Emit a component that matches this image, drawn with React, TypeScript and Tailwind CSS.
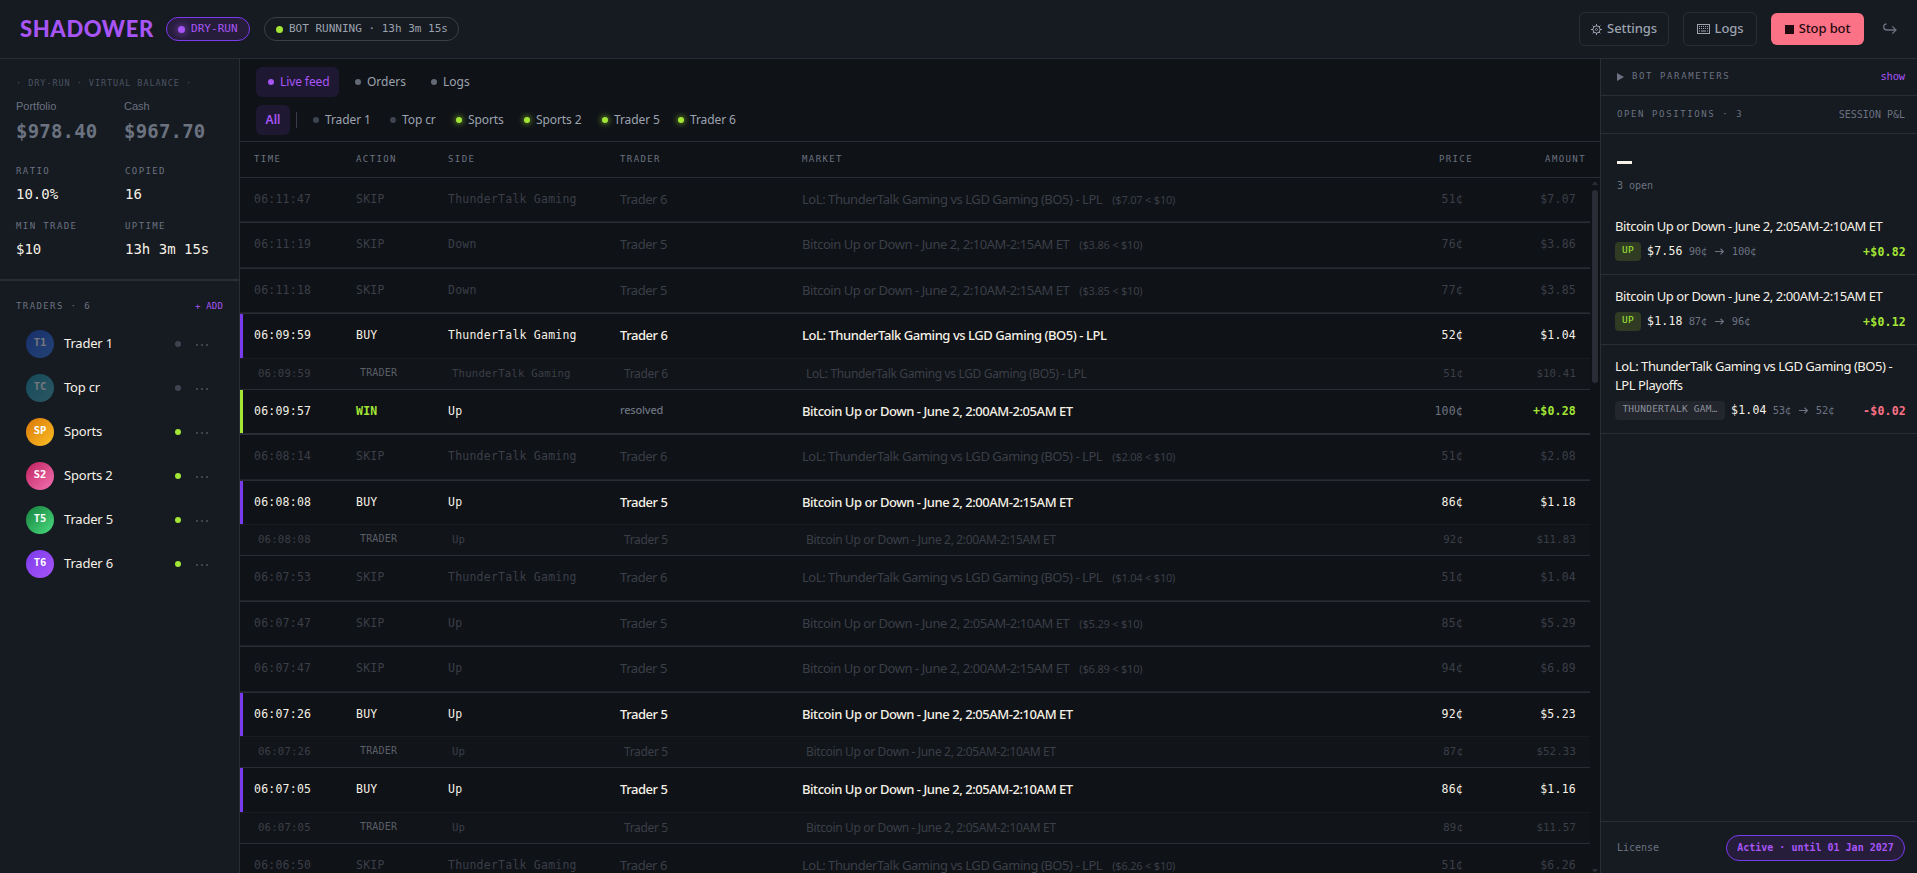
import { clsx } from "clsx";

type FeedKind = "skip" | "buy" | "copy" | "win";

interface FeedRow {
  kind: FeedKind;
  time: string;
  side: string;
  trader: string;
  market: string;
  note?: string;
  price: string;
  amount: string;
  height: string;
}

interface Trader {
  name: string;
  initials: string;
  active: boolean;
  gradient: string;
}

interface Position {
  title: string;
  side: string;
  stake: string;
  from: string;
  to: string;
  pnl: string;
  height: string;
}

const LOL = "LoL: ThunderTalk Gaming vs LGD Gaming (BO5) - LPL";
const BTC = "Bitcoin Up or Down - June 2, ";

const rows: FeedRow[] = [
  { kind: "skip", time: "06:11:47", side: "ThunderTalk Gaming", trader: "Trader 6", market: LOL, note: "($7.07 < $10)", price: "51¢", amount: "$7.07", height: "h-[45px]" },
  { kind: "skip", time: "06:11:19", side: "Down", trader: "Trader 5", market: `${BTC}2:10AM-2:15AM ET`, note: "($3.86 < $10)", price: "76¢", amount: "$3.86", height: "h-[46px]" },
  { kind: "skip", time: "06:11:18", side: "Down", trader: "Trader 5", market: `${BTC}2:10AM-2:15AM ET`, note: "($3.85 < $10)", price: "77¢", amount: "$3.85", height: "h-[45px]" },
  { kind: "buy", time: "06:09:59", side: "ThunderTalk Gaming", trader: "Trader 6", market: LOL, price: "52¢", amount: "$1.04", height: "h-[45px]" },
  { kind: "copy", time: "06:09:59", side: "ThunderTalk Gaming", trader: "Trader 6", market: LOL, price: "51¢", amount: "$10.41", height: "h-[31px]" },
  { kind: "win", time: "06:09:57", side: "Up", trader: "resolved", market: `${BTC}2:00AM-2:05AM ET`, price: "100¢", amount: "+$0.28", height: "h-[45px]" },
  { kind: "skip", time: "06:08:14", side: "ThunderTalk Gaming", trader: "Trader 6", market: LOL, note: "($2.08 < $10)", price: "51¢", amount: "$2.08", height: "h-[46px]" },
  { kind: "buy", time: "06:08:08", side: "Up", trader: "Trader 5", market: `${BTC}2:00AM-2:15AM ET`, price: "86¢", amount: "$1.18", height: "h-[44px]" },
  { kind: "copy", time: "06:08:08", side: "Up", trader: "Trader 5", market: `${BTC}2:00AM-2:15AM ET`, price: "92¢", amount: "$11.83", height: "h-[31px]" },
  { kind: "skip", time: "06:07:53", side: "ThunderTalk Gaming", trader: "Trader 6", market: LOL, note: "($1.04 < $10)", price: "51¢", amount: "$1.04", height: "h-[46px]" },
  { kind: "skip", time: "06:07:47", side: "Up", trader: "Trader 5", market: `${BTC}2:05AM-2:10AM ET`, note: "($5.29 < $10)", price: "85¢", amount: "$5.29", height: "h-[45px]" },
  { kind: "skip", time: "06:07:47", side: "Up", trader: "Trader 5", market: `${BTC}2:00AM-2:15AM ET`, note: "($6.89 < $10)", price: "94¢", amount: "$6.89", height: "h-[46px]" },
  { kind: "buy", time: "06:07:26", side: "Up", trader: "Trader 5", market: `${BTC}2:05AM-2:10AM ET`, price: "92¢", amount: "$5.23", height: "h-[44px]" },
  { kind: "copy", time: "06:07:26", side: "Up", trader: "Trader 5", market: `${BTC}2:05AM-2:10AM ET`, price: "87¢", amount: "$52.33", height: "h-[31px]" },
  { kind: "buy", time: "06:07:05", side: "Up", trader: "Trader 5", market: `${BTC}2:05AM-2:10AM ET`, price: "86¢", amount: "$1.16", height: "h-[45px]" },
  { kind: "copy", time: "06:07:05", side: "Up", trader: "Trader 5", market: `${BTC}2:05AM-2:10AM ET`, price: "89¢", amount: "$11.57", height: "h-[31px]" },
  { kind: "skip", time: "06:06:50", side: "ThunderTalk Gaming", trader: "Trader 6", market: LOL, note: "($6.26 < $10)", price: "51¢", amount: "$6.26", height: "h-[46px]" },
];

const traders: Trader[] = [
  { name: "Trader 1", initials: "T1", active: false, gradient: "from-[#1d4ed8] to-[#3b82f6]" },
  { name: "Top cr", initials: "TC", active: false, gradient: "from-[#0891b2] to-[#4cb5c4]" },
  { name: "Sports", initials: "SP", active: true, gradient: "from-[#d97706] to-[#fbbf24]" },
  { name: "Sports 2", initials: "S2", active: true, gradient: "from-[#be185d] to-[#f472b6]" },
  { name: "Trader 5", initials: "T5", active: true, gradient: "from-[#15803d] to-[#4ade80]" },
  { name: "Trader 6", initials: "T6", active: true, gradient: "from-[#7c3aed] to-[#a855f7]" },
];

const positions: Position[] = [
  { title: `${BTC}2:05AM-2:10AM ET`, side: "UP", stake: "$7.56", from: "90¢", to: "100¢", pnl: "+$0.82", height: "h-[70px]" },
  { title: `${BTC}2:00AM-2:15AM ET`, side: "UP", stake: "$1.18", from: "87¢", to: "96¢", pnl: "+$0.12", height: "h-[70px]" },
  { title: "LoL: ThunderTalk Gaming vs LGD Gaming (BO5) - LPL Playoffs", side: "THUNDERTALK GAM…", stake: "$1.04", from: "53¢", to: "52¢", pnl: "-$0.02", height: "h-[89px]" },
];

const mono = "font-['DejaVu_Sans_Mono',monospace]";
const sans = "font-['Noto_Sans',sans-serif]";
const mono13 = `${mono} text-[11.5px] tracking-[0.23px]`;
const label = `${mono} text-[9px] tracking-[1.4px] text-[#6b7280]`;
const columns =
  "grid grid-cols-[102px_92px_172px_182px_minmax(0,1fr)_113px] items-center";

function Dot({ className }: { className: string }) {
  return <span className={clsx("shrink-0 rounded-full", className)} />;
}

function Header() {
  return (
    <header className="flex h-[59px] shrink-0 items-center border-b border-[#2a2d35] bg-[#161a21] pl-5 pr-5">
      <div className="w-[146px] font-['Lato',sans-serif] text-[22px] leading-none font-black tracking-[0.6px] text-[#a855f7]">
        SHADOWER
      </div>
      <div className={clsx("flex h-6 w-[84px] items-center rounded-full border border-[#7c3aed] bg-[#261d3b] pl-[11px] text-[#a855f7]", mono, "text-[11px] tracking-[0.05px]")}>
        <Dot className="mr-1.5 size-[7px] bg-[#a855f7] shadow-[0_0_8px_#a855f7]" />
        DRY-RUN
      </div>
      <div className={clsx("ml-3.5 flex h-6 w-[195px] items-center rounded-full border border-[#3a3e48] pl-[11px] whitespace-pre text-[#9ca3af]", mono, "text-[11px]")}>
        <Dot className="mr-1.5 size-[7px] bg-[#a3e635]" />
        BOT RUNNING · 13h 3m 15s
      </div>
      <div className={clsx("ml-auto flex items-center gap-3.5 text-[13px] font-medium", sans)}>
        <button className="flex h-[34px] w-[90px] items-center justify-center gap-[5px] rounded-md border border-[#2a2d35] text-[#9ca3af]">
          <svg width="11" height="11" viewBox="0 0 11 11" fill="none" stroke="currentColor">
            <circle cx="5.5" cy="5.5" r="3.6" />
            <circle cx="5.5" cy="5.5" r="1" strokeWidth="0.8" />
            <path d="M5.5 0v2M5.5 9v2M0 5.5h2M9 5.5h2M1.6 1.6l1.3 1.3M8.1 8.1l1.3 1.3M1.6 9.4l1.3-1.3M8.1 2.9l1.3-1.3" />
          </svg>
          <span className="tracking-[-0.1px]">Settings</span>
        </button>
        <button className="flex h-[34px] w-[74px] items-center justify-center gap-[5px] rounded-md border border-[#2a2d35] text-[#9ca3af]">
          <svg width="13" height="10" viewBox="0 0 13 10" fill="none" stroke="currentColor">
            <rect x="0.5" y="0.5" width="12" height="9" />
            <path d="M2 2.5h9M2 4.5h9" strokeDasharray="1 1" />
            <path d="M2 7h1M4 7h5M10 7h1" />
          </svg>
          <span className="tracking-[-0.1px]">Logs</span>
        </button>
        <button className="flex h-8 w-[93px] items-center justify-center gap-[5px] rounded-md bg-[#fb7185] text-[#1f0a0f]">
          <span className="size-[9px] bg-[#1f0a0f]" />
          <span className="tracking-[-0.1px] whitespace-nowrap">Stop bot</span>
        </button>
        <svg className="ml-[5px]" width="14" height="12" viewBox="0 0 14 12" fill="none" stroke="#6b7280" strokeWidth="1.3">
          <path d="M3.5 1C1.6 1 .7 2 .7 3.7S1.9 7 4 7h8.6M9.3 3.4L13 7l-3.7 3.6" />
        </svg>
      </div>
    </header>
  );
}

function Stat({ name, value }: { name: string; value: string }) {
  return (
    <div className="h-[55px]">
      <div className={clsx(label, "leading-3")}>{name}</div>
      <div className={clsx("mt-[7px] text-[14px] leading-5 whitespace-pre text-[#f5f1e6]", mono)}>
        {value}
      </div>
    </div>
  );
}

function Balance({ name, value }: { name: string; value: string }) {
  return (
    <div className="text-[#6b7280]">
      <div className="font-['Liberation_Sans',sans-serif] text-[11px] leading-4">{name}</div>
      <div className={clsx("mt-1 text-[19px] leading-[26px] font-bold tracking-[0.2px]", mono)}>
        {value}
      </div>
    </div>
  );
}

function Sidebar() {
  return (
    <aside className="flex w-60 shrink-0 flex-col border-r border-[#2a2d35] bg-[#161a21]">
      <div className="h-[222px] shrink-0 border-b-2 border-[#2a2d35] pt-[18px] pl-4">
        <div className={clsx("text-[8.5px] leading-3 tracking-[0.95px] text-[#4b5563]", mono)}>
          · DRY-RUN · VIRTUAL BALANCE ·
        </div>
        <div className="mt-[9px] grid grid-cols-[108px_1fr]">
          <Balance name="Portfolio" value="$978.40" />
          <Balance name="Cash" value="$967.70" />
        </div>
        <div className="mt-[21px] grid grid-cols-[109px_1fr]">
          <Stat name="RATIO" value="10.0%" />
          <Stat name="COPIED" value="16" />
          <Stat name="MIN TRADE" value="$10" />
          <Stat name="UPTIME" value="13h 3m 15s" />
        </div>
      </div>
      <div className="flex items-center justify-between pt-[19px] pr-4 pl-4">
        <span className={clsx(label, "leading-3")}>TRADERS · 6</span>
        <span className={clsx("text-[9px] leading-3 tracking-[0.2px] text-[#a855f7]", mono)}>
          + ADD
        </span>
      </div>
      <div className="mt-[10px]">
        {traders.map((trader) => (
          <div key={trader.name} className="flex h-11 items-center pl-[26px]">
            <div
              className={clsx(
                "flex size-7 items-center justify-center rounded-full bg-linear-135 pb-[3px] text-[10.5px] font-bold text-white",
                mono,
                trader.gradient,
                !trader.active && "opacity-40",
              )}
            >
              {trader.initials}
            </div>
            <span className={clsx("ml-2.5 w-[111px] text-[13px] tracking-[-0.2px] text-[#f5f1e6]", sans)}>
              {trader.name}
            </span>
            <Dot className={clsx("size-1.5", trader.active ? "bg-[#a3e635]" : "bg-[#3f4451]")} />
            <span className="ml-[15px] flex gap-[3px] pt-0.5">
              <i className="size-[2px] bg-[#3f4451]" />
              <i className="size-[2px] bg-[#3f4451]" />
              <i className="size-[2px] bg-[#3f4451]" />
            </span>
          </div>
        ))}
      </div>
    </aside>
  );
}

function Tabs() {
  return (
    <div className={clsx("h-[83px] shrink-0 border-b border-[#2a2d35] pt-2 pl-4 text-[12px]", sans)}>
      <div className="flex h-[30px] items-center text-[#9ca3af]">
        <div className="flex h-[30px] w-[83px] items-center rounded-md bg-[#1f1833] pl-3 text-[#a855f7]">
          <Dot className="mr-1.5 size-1.5 bg-[#a855f7]" />
          <span className="tracking-[-0.1px]">Live feed</span>
        </div>
        <div className="ml-4 flex w-[76px] items-center">
          <Dot className="mr-1.5 size-1.5 bg-[#646a76]" />
          Orders
        </div>
        <div className="flex items-center">
          <Dot className="mr-1.5 size-1.5 bg-[#646a76]" />
          Logs
        </div>
      </div>
      <div className="mt-2 flex h-[30px] items-center text-[#9ca3af]">
        <div className="flex h-[30px] w-[34px] items-center justify-center rounded-md bg-[#1f1833] font-semibold text-[#a855f7]">
          All
        </div>
        <span className="ml-1.5 h-4 w-px bg-[#3a3e48]" />
        {traders.map((trader, i) => (
          <div
            key={trader.name}
            className={clsx(
              "flex shrink-0 items-center",
              i === 0 && "ml-4 w-[77px]",
              i === 1 && "w-[66px]",
              i === 2 && "w-[68px]",
              i === 3 && "w-[78px]",
              i === 4 && "w-[76px]",
            )}
          >
            <Dot
              className={clsx(
                "mr-1.5 size-1.5",
                trader.active ? "bg-[#a3e635] shadow-[0_0_6px_#a3e635]" : "bg-[#3f4451]",
              )}
            />
            <span className="tracking-[-0.1px]">{trader.name}</span>
          </div>
        ))}
      </div>
    </div>
  );
}

const actionLabel: Record<FeedKind, string> = {
  skip: "SKIP",
  buy: "BUY",
  copy: "TRADER",
  win: "WIN",
};

function FeedItem({ row }: { row: FeedRow }) {
  const { kind } = row;
  const strong = kind === "buy" || kind === "win";
  const copy = kind === "copy";

  return (
    <div className={clsx("flex shrink-0 flex-col", row.height, copy && "bg-[#111419]")}>
      <div
        className={clsx(
          "min-h-0 flex-1 border-l-[3px] pr-[14px] pl-[11px]",
          columns,
          kind === "buy" && "border-[#7c3aed]",
          kind === "win" && "border-[#a3e635]",
          !strong && "border-transparent",
          strong ? "text-[#f5f1e6]" : "text-[#3b3f48]",
          copy ? `${mono} text-[10.7px] tracking-[0.16px]` : mono13,
          strong && "font-medium",
        )}
      >
        <span className={clsx(copy && "pl-1")}>{row.time}</span>
        <span
          className={clsx(
            kind === "win" && "font-bold text-[#a3e635]",
            copy && "pb-[3px] pl-1 text-[10px] text-[#5b5f68]",
          )}
        >
          {actionLabel[kind]}
        </span>
        <span className={clsx(copy && "pl-1")}>{row.side}</span>
        <span
          className={clsx(
            sans,
            kind === "win" ? "pb-0.5 text-[11px] tracking-[-0.2px] text-[#6b7280]" : copy ? "pl-1 text-[12px] tracking-[-0.35px]" : "text-[13px] tracking-[-0.45px]",
          )}
        >
          {row.trader}
        </span>
        <span className={clsx(sans, "whitespace-nowrap", copy ? "pl-1 text-[12px] tracking-[-0.35px]" : "text-[13px] tracking-[-0.45px]")}>
          {row.market}
          {row.note && <span className="ml-2.5 text-[11px] tracking-[-0.2px]">{row.note}</span>}
        </span>
        <span className="flex w-[113px] justify-end">
          <span className={clsx("mr-[113px] whitespace-nowrap", kind === "win" && "text-[#6b7280]")}>
            {row.price}
          </span>
          <span className={clsx("-ml-[113px] w-[113px] shrink-0 text-right", kind === "win" && "font-bold text-[#a3e635]")}>
            {row.amount}
          </span>
        </span>
      </div>
      {(kind === "skip" || kind === "win") && (
        <div className={clsx("h-px", kind === "win" ? "bg-[#2a2d35]" : "bg-[#1f2228]")} />
      )}
      <div className={clsx("h-px", kind === "buy" ? "bg-[#181b20]" : "bg-[#2a2d35]")} />
    </div>
  );
}

function Feed() {
  return (
    <main className="flex min-w-0 flex-1 flex-col bg-[#0f1217]">
      <Tabs />
      <div className={clsx("h-9 shrink-0 border-b border-[#2a2d35] pr-[14px] pl-[14px]", columns, label)}>
        <span>TIME</span>
        <span>ACTION</span>
        <span>SIDE</span>
        <span>TRADER</span>
        <span className="flex justify-between">
          MARKET <span>PRICE</span>
        </span>
        <span className="text-right">AMOUNT</span>
      </div>
      <div className="flex min-h-0 flex-1">
        <div className="flex min-w-0 flex-1 flex-col overflow-hidden">
          {rows.map((row, i) => (
            <FeedItem key={i} row={row} />
          ))}
        </div>
        <div className="flex w-2.5 shrink-0 flex-col items-center pt-[3px]">
          <svg width="6" height="4" viewBox="0 0 6 4" fill="#2a2d35">
            <path d="M3 0l3 4H0z" />
          </svg>
          <span className="mt-[5px] h-[193px] w-1.5 rounded-full bg-[#2a2d35]" />
          <svg className="mt-auto" width="6" height="4" viewBox="0 0 6 4" fill="#2a2d35">
            <path d="M0 0h6L3 4z" />
          </svg>
        </div>
      </div>
    </main>
  );
}

function PositionCard({ position }: { position: Position }) {
  const up = position.side === "UP";

  return (
    <div className={clsx("shrink-0 border-b border-[#2a2d35] pt-[12px] pr-[11px] pl-3.5", position.height)}>
      <div className={clsx("text-[13px] leading-[19px] tracking-[-0.45px] text-[#f5f1e6]", sans)}>
        {position.title}
      </div>
      <div className={clsx("mt-[6px] flex h-[19px] items-center", mono13)}>
        <span
          className={clsx(
            "flex h-[19px] items-center justify-center rounded pb-0.5 text-[9.5px]",
            up ? "w-[26px] bg-[#2f3b23] text-[#a3e635]" : "w-[110px] bg-[#23262d] text-[#8b919c]",
          )}
        >
          {position.side}
        </span>
        <span className="ml-1.5 text-[#f5f1e6]">{position.stake}</span>
        <span className="ml-1.5 flex items-center text-[10.5px] tracking-[-0.3px] text-[#6b7280]">
          {position.from}
          <svg className="mx-[8px]" width="9" height="7" viewBox="0 0 9 7" fill="none" stroke="currentColor" strokeWidth="1.2">
            <path d="M0 3.5h8.5M5.5 .8l3 2.7-3 2.7" />
          </svg>
          {position.to}
        </span>
        <span className={clsx("ml-auto pt-[2px] font-bold", position.pnl.startsWith("+") ? "text-[#a3e635]" : "text-[#fb7185]")}>
          {position.pnl}
        </span>
      </div>
    </div>
  );
}

function PositionsPanel() {
  return (
    <aside className="flex w-[317px] shrink-0 flex-col border-l border-[#2a2d35] bg-[#161a21]">
      <div className="flex h-[37px] shrink-0 items-center border-b border-[#2a2d35] pr-3 pl-4">
        <svg width="7" height="8" viewBox="0 0 7 8" fill="#6b7280">
          <path d="M0 0l7 4-7 4z" />
        </svg>
        <span className={clsx(label, "ml-2 tracking-[1.6px]")}>BOT PARAMETERS</span>
        <span className={clsx("ml-auto text-[10.5px] tracking-[-0.2px] text-[#a855f7]", mono)}>show</span>
      </div>
      <div className="flex h-[38px] shrink-0 items-center justify-between border-b border-[#2a2d35] pr-3 pl-4">
        <span className={clsx(label, "tracking-[1.6px]")}>OPEN POSITIONS · 3</span>
        <span className={clsx("text-[10px] text-[#6b7280]", mono)}>SESSION P&L</span>
      </div>
      <div className="h-[71px] shrink-0 pt-[27px] pl-4">
        <div className="h-[3px] w-[15px] bg-[#f5f1e6]" />
        <div className={clsx("mt-[14px] text-[10px] leading-4 text-[#6b7280]", mono)}>3 open</div>
      </div>
      {positions.map((position) => (
        <PositionCard key={position.title} position={position} />
      ))}
      <div className="mt-auto flex h-[52px] shrink-0 items-center justify-between border-t border-[#2a2d35] pr-3 pl-4">
        <span className={clsx("text-[10px] text-[#6b7280]", mono)}>License</span>
        <span className={clsx("flex h-[26px] w-[179px] items-center justify-center rounded-full border border-[#7c3aed] bg-[#261d3b] text-[10px] font-bold text-[#a855f7]", mono)}>
          Active · until 01 Jan 2027
        </span>
      </div>
    </aside>
  );
}

export default function App() {
  return (
    <div className="flex h-screen w-full flex-col overflow-hidden bg-[#0f1217]">
      <Header />
      <div className="flex min-h-0 flex-1">
        <Sidebar />
        <Feed />
        <PositionsPanel />
      </div>
    </div>
  );
}
